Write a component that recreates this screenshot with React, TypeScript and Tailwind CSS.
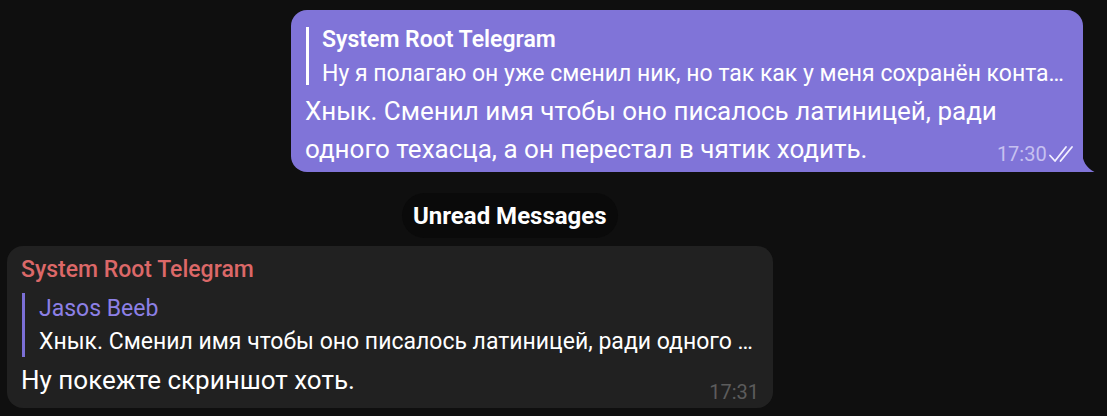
import React from "react";

function DoubleCheck() {
  return (
    <svg width="30" height="18" viewBox="0 0 30 18" fill="none" stroke="currentColor" strokeWidth="1.8" strokeLinecap="round" strokeLinejoin="round">
      <path d="M2 10.5 L7 16 L18 2" />
      <path d="M12.5 16 L24 2" />
    </svg>
  );
}

function Tail() {
  return (
    <svg className="absolute bottom-0 right-[-12px]" width="13" height="20" viewBox="0 0 13 20">
      <path d="M0 0 C0.5 9 4 15.5 12.5 20 H0 Z" fill="#8074d8" />
    </svg>
  );
}

export default function App() {
  return (
    <div className="w-full h-[416px] overflow-hidden bg-[#0f0f0f] font-['Roboto',sans-serif] text-white">
      <div className="flex justify-end pt-[10px] pr-[24px]">
        <div className="relative w-[792px] h-[162px] bg-[#8074d8] rounded-[16px] rounded-br-none px-[14px] pt-[17px]">
          <div className="border-l-[3px] border-white pl-[13px] ml-[1px] h-[58px]">
            <div className="text-[23px] font-semibold leading-[26px]">System Root Telegram</div>
            <div className="text-[23px] leading-[26px] mt-[8px] truncate pr-[2px]">
              Ну я полагаю он уже сменил ник, но так как у меня сохранён контакт, то он у меня так и остался
            </div>
          </div>
          <div className="flex items-end justify-between mt-[7px]">
            <p className="text-[26px] leading-[38px] whitespace-nowrap">
              Хнык. Сменил имя чтобы оно писалось латиницей, ради
              <br />
              одного техасца, а он перестал в чятик ходить.
            </p>
            <span className="flex items-center gap-[1px] text-[20px] leading-[24px] text-[#c6c0f0] mb-[2px] mr-[-6px]">
              17:30
              <span className="text-[#f2f0ff]">
                <DoubleCheck />
              </span>
            </span>
          </div>
          <Tail />
        </div>
      </div>

      <div className="pl-[402px] mt-[21px]">
        <div className="inline-flex items-center h-[45px] px-[11px] rounded-full bg-[#0a0a0a] text-[24px] font-bold">
          Unread Messages
        </div>
      </div>

      <div className="pl-[7px] mt-[8px]">
        <div className="w-[766px] h-[162px] bg-[#212121] rounded-[16px] px-[14px] pt-[9px]">
          <div className="text-[23px] font-medium leading-[30px] text-[#dc6868]">System Root Telegram</div>
          <div className="border-l-[3px] border-[#7b6fd6] pl-[14px] ml-[1px] mt-[8px]">
            <div className="text-[23px] leading-[30px] text-[#8d80e6] pt-[1px]">Jasos Beeb</div>
            <div className="text-[23px] leading-[30px] mt-[3px] truncate pr-[2px]">
              Хнык. Сменил имя чтобы оно писалось латиницей, ради одного техасца, а он перестал в чятик ходить.
            </div>
          </div>
          <div className="flex items-end justify-between mt-[5px]">
            <p className="text-[26px] leading-[36px]">Ну покежте скриншот хоть.</p>
            <span className="text-[20px] leading-[24px] text-[#5c5c5c] mb-[-6px]">17:31</span>
          </div>
        </div>
      </div>
    </div>
  );
}
